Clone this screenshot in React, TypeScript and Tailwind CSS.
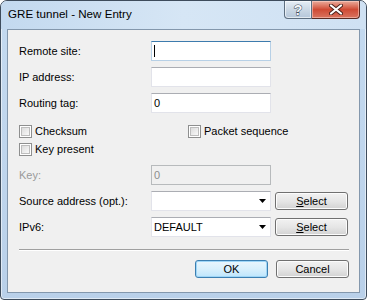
import React from "react";

const formFont = { fontFamily: '"Liberation Sans", Arial, sans-serif' };

function TextBox({ value, focused, disabled }: { value?: string; focused?: boolean; disabled?: boolean }) {
    const border = focused
        ? "border-[#b7d0e6] border-t-[#3d7bad]"
        : disabled
            ? "border-[#b7babc]"
            : "border-[#e2e3ea] border-t-[#abadb3]";
    return (
        <div
            className={`flex h-[20px] w-[120px] items-center border pl-[2px] text-[11px] ${border} ${disabled ? "bg-[#f0f0f0] text-[#8d8d8d]" : "bg-white text-black"}`}
        >
            {focused && <span className="h-[12px] w-px bg-black" />}
            {value}
        </div>
    );
}

function Combo({ value }: { value?: string }) {
    return (
        <div className="flex h-[20px] w-[120px] items-center justify-between border border-[#e2e3ea] border-t-[#abadb3] bg-white pl-[2px] pr-[4px] text-[11px] text-black">
            <span>{value}</span>
            <svg width="7" height="4" viewBox="0 0 7 4">
                <path d="M0 0h7L3.5 4z" fill="#000" />
            </svg>
        </div>
    );
}

function WinButton({ children, isDefault }: { children: React.ReactNode; isDefault?: boolean }) {
    return (
        <button
            className={`flex h-[18px] w-[73px] items-center justify-center rounded-[3px] border text-[11px] text-black ${isDefault
                ? "border-[#3c7fb1] bg-gradient-to-b from-[#eaf6fd] via-[#d9f0fc] to-[#bee6fd] shadow-[inset_0_0_0_1px_#9fd6f7]"
                : "border-[#707070] bg-gradient-to-b from-[#f2f2f2] via-[#e6e6e6] to-[#d2d2d2] shadow-[inset_0_0_0_1px_#fcfcfc]"
                }`}
        >
            {children}
        </button>
    );
}

function CheckBox({ label }: { label: string }) {
    return (
        <div className="flex h-[13px] items-center gap-[3px]">
            <span className="flex h-[13px] w-[13px] items-center justify-center border border-[#8e8f8f] bg-white">
                <span className="h-[9px] w-[9px] border border-[#bdbdbd] bg-gradient-to-br from-[#dcdcdc] to-[#f9f9f9]" />
            </span>
            <span className="text-[11px] leading-none text-black">{label}</span>
        </div>
    );
}

function Row({ label, disabled, children }: { label: string; disabled?: boolean; children: React.ReactNode }) {
    return (
        <div className="flex h-[20px] items-center">
            <span className={`w-[132px] text-[11px] ${disabled ? "text-[#9a9a9a]" : "text-black"}`}>{label}</span>
            {children}
        </div>
    );
}

export default function App() {
    return (
        <div className="h-[300px] w-[367px] bg-white">
            <div className="flex h-[300px] w-[367px] flex-col rounded-t-[7px] rounded-b-[4px] border border-[#3e4c5c] bg-gradient-to-b from-[#c4daf0] via-[#c0d6ed] to-[#b9d0e9] shadow-[inset_0_0_0_1px_rgba(255,255,255,0.55)]">
                <div className="flex h-[28px] items-start bg-gradient-to-r from-[#c3d9ef] via-[#d6e6f5] to-[#cfe1f3] rounded-t-[6px]">
                    <span
                        className="mt-[7px] pl-[7px] text-[11.6px] leading-none text-black"
                        style={{ fontFamily: '"Segoe UI", "Liberation Sans", Arial, sans-serif' }}
                    >
                        GRE tunnel - New Entry
                    </span>
                    <div className="ml-auto mr-[6px] flex h-[18px]">
                        <div className="flex w-[28px] items-center justify-center rounded-bl-[4px] border border-t-0 border-[#5d6e80] bg-gradient-to-b from-[#e6eef6] via-[#cbd8e5] to-[#b4c6d9] shadow-[inset_0_0_0_1px_rgba(255,255,255,0.6)]">
                            <svg width="12" height="14" viewBox="0 0 12 14">
                                <text x="6" y="12" textAnchor="middle" fontSize="14" fontWeight="bold" fontFamily="Liberation Sans, Arial, sans-serif" fill="#f4f7fa" stroke="#3f4e5e" strokeWidth="1" paintOrder="stroke">?</text>
                            </svg>
                        </div>
                        <div className="flex w-[48px] items-center justify-center rounded-br-[4px] border border-l-0 border-t-0 border-[#5a2a22] bg-gradient-to-b from-[#e9ab9c] via-[#cf4a34] to-[#d9735f] shadow-[inset_0_0_0_1px_rgba(255,220,210,0.5)]">
                            <svg width="14" height="11" viewBox="0 0 14 11">
                                <path d="M2 1.5L12 9.5M12 1.5L2 9.5" stroke="#4a2019" strokeWidth="4" strokeLinecap="round" />
                                <path d="M2 1.5L12 9.5M12 1.5L2 9.5" stroke="#ffffff" strokeWidth="2.2" strokeLinecap="round" />
                            </svg>
                        </div>
                    </div>
                </div>

                <div className="mx-[6px] mb-[6px] flex flex-1 flex-col border border-[#8397ac] bg-[#f0f0f0]" style={formFont}>
                    <div className="flex flex-col pl-[11px] pt-[11px]">
                        <Row label="Remote site:">
                            <TextBox focused />
                        </Row>
                        <div className="mt-[6px]">
                            <Row label="IP address:">
                                <TextBox />
                            </Row>
                        </div>
                        <div className="mt-[6px]">
                            <Row label="Routing tag:">
                                <TextBox value="0" />
                            </Row>
                        </div>
                        <div className="mt-[12px] flex">
                            <div className="w-[169px]">
                                <CheckBox label="Checksum" />
                            </div>
                            <CheckBox label="Packet sequence" />
                        </div>
                        <div className="mt-[5px]">
                            <CheckBox label="Key present" />
                        </div>
                        <div className="mt-[9px]">
                            <Row label="Key:" disabled>
                                <TextBox value="0" disabled />
                            </Row>
                        </div>
                        <div className="mt-[6px]">
                            <Row label="Source address (opt.):">
                                <Combo />
                                <div className="ml-[4px]">
                                    <WinButton>
                                        <span className="underline">S</span>elect
                                    </WinButton>
                                </div>
                            </Row>
                        </div>
                        <div className="mt-[6px]">
                            <Row label="IPv6:">
                                <Combo value="DEFAULT" />
                                <div className="ml-[4px]">
                                    <WinButton>
                                        <span className="underline">S</span>elect
                                    </WinButton>
                                </div>
                            </Row>
                        </div>
                    </div>
                    <div className="ml-[11px] mr-[10px] mt-[12px] h-[2px] border-t border-b border-t-[#a0a0a0] border-b-white" />
                    <div className="mr-[10px] mt-[9px] flex justify-end gap-[8px]">
                        <WinButton isDefault>OK</WinButton>
                        <WinButton>Cancel</WinButton>
                    </div>
                </div>
            </div>
        </div>
    );
}
